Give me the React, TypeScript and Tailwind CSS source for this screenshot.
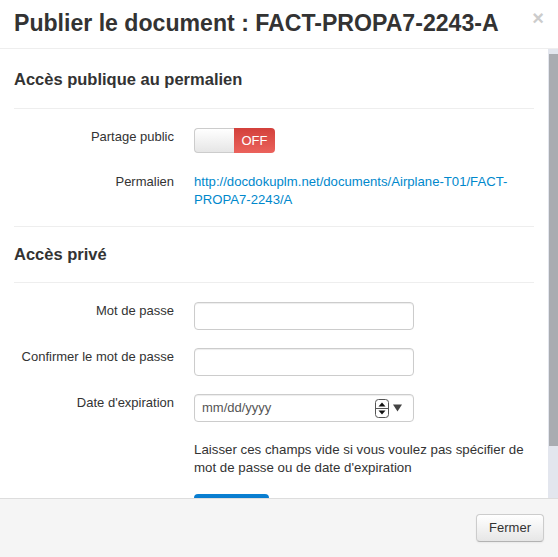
import React from "react";

function Row({ label, children, className = "" }: { label: string; children: React.ReactNode; className?: string }) {
  return (
    <div className={`flex items-start ${className}`}>
      <label className="w-[160px] shrink-0 text-right text-[13px] leading-[18px] text-[#333]">{label}</label>
      <div className="ml-[20px] flex-1 min-w-0">{children}</div>
    </div>
  );
}

function TextInput() {
  return (
    <div className="w-[220px] h-[28px] rounded-[4px] border border-[#ccc] bg-white shadow-[inset_0_1px_1px_rgba(0,0,0,0.075)]" />
  );
}

function DateInput() {
  return (
    <div className="w-[220px] h-[28px] rounded-[4px] border border-[#ccc] bg-white shadow-[inset_0_1px_1px_rgba(0,0,0,0.075)] flex items-center pl-[7px] pr-[11px]">
      <span className="flex-1 text-[13px] text-[#555]">mm/dd/yyyy</span>
      <svg width="14" height="19" viewBox="0 0 14 19" className="mr-[4px]">
        <rect x="0.5" y="0.5" width="13" height="18" rx="3" fill="#fff" stroke="#555" />
        <line x1="1" y1="9.5" x2="13" y2="9.5" stroke="#555" />
        <path d="M3.5 7.5 L7 3.5 L10.5 7.5 Z" fill="#111" />
        <path d="M3.5 11.5 L7 15.5 L10.5 11.5 Z" fill="#111" />
      </svg>
      <svg width="9" height="8" viewBox="0 0 9 8">
        <path d="M0 0.5 L9 0.5 L4.5 7.5 Z" fill="#444" />
      </svg>
    </div>
  );
}

export default function App() {
  return (
    <div className="w-[558px] h-[557px] bg-white flex flex-col overflow-hidden font-['Liberation_Sans',Arial,sans-serif] text-[#333]">
      {/* Header */}
      <div className="flex items-start justify-between pl-[14px] pr-[14px] pt-[8px] pb-[10px] border-b border-[#eee] shrink-0">
        <h3 className="text-[23.1px] leading-[30px] font-bold text-[#333]">Publier le document : FACT-PROPA7-2243-A</h3>
        <button className="text-[20px] leading-[20px] font-bold text-[#ccc]">×</button>
      </div>

      {/* Body */}
      <div className="flex flex-1 min-h-0">
        <div className="flex-1 overflow-hidden px-[14px] pt-[20px]">
          <h4 className="text-[16.5px] leading-[20px] font-bold">Accès publique au permalien</h4>
          <div className="mt-[19px] h-px bg-[#eee]" />

          <Row label="Partage public" className="mt-[19px]">
            <div className="flex w-[81px] h-[25px]">
              <div className="w-[40px] rounded-l-[4px] border border-r-0 border-[#ccc] bg-linear-to-b from-white to-[#e6e6e6]" />
              <div className="flex-1 rounded-r-[4px] bg-linear-to-b from-[#d3403b] to-[#eb625c] flex items-center justify-center text-[13px] text-white">
                OFF
              </div>
            </div>
          </Row>

          <Row label="Permalien" className="mt-[20px]">
            <a className="block text-[13.15px] leading-[18px] text-[#0088cc]">
              http://docdokuplm.net/documents/Airplane-T01/FACT-PROPA7-2243/A
            </a>
          </Row>

          <div className="mt-[17px] h-px bg-[#eee]" />
          <h4 className="mt-[17px] text-[16.5px] leading-[20px] font-bold">Accès privé</h4>
          <div className="mt-[18px] h-px bg-[#eee]" />

          <Row label="Mot de passe" className="mt-[19px]">
            <TextInput />
          </Row>
          <Row label="Confirmer le mot de passe" className="mt-[18px]">
            <TextInput />
          </Row>
          <Row label="Date d'expiration" className="mt-[18px]">
            <DateInput />
          </Row>

          <p className="mt-[19px] ml-[180px] text-[13.3px] leading-[18px] text-[#333]">
            Laisser ces champs vide si vous voulez pas spécifier de mot de passe ou de date d'expiration
          </p>

          <button
            aria-label="Enregistrer"
            className="block mt-[17px] ml-[180px] w-[75px] h-[28px] rounded-[4px] bg-linear-to-b from-[#0a80d2] to-[#0561b8]"
          />
        </div>

        {/* Scrollbar */}
        <div className="w-[10px] shrink-0 bg-[#e3e6ee] pt-[5px]">
          <div className="ml-px h-[392px] bg-[#a9acb1]" />
        </div>
      </div>

      {/* Footer */}
      <div className="h-[59px] shrink-0 border-t border-[#ddd] bg-[#f5f5f5] flex justify-end items-start pt-[15px] pr-[14px]">
        <button className="h-[28px] px-[12px] rounded-[4px] border border-[#ccc] border-b-[#b3b3b3] bg-linear-to-b from-white to-[#e6e6e6] text-[13px] text-[#333] shadow-[inset_0_1px_0_rgba(255,255,255,0.2),0_1px_2px_rgba(0,0,0,0.05)]">
          Fermer
        </button>
      </div>
    </div>
  );
}
